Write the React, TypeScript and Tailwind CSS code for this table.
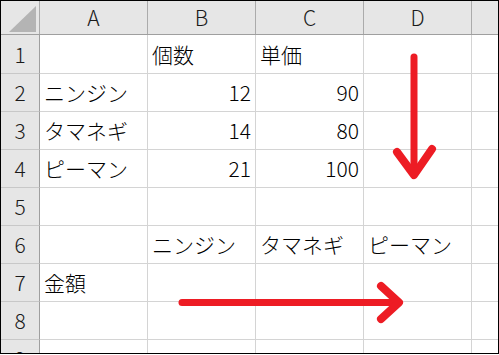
import React from "react";

const COLS = ["A", "B", "C", "D"];

type Cell = { text: string; align?: "left" | "right" };

const ROWS: { label: string; h: string; cells: (Cell | null)[] }[] = [
  { label: "1", h: "h-[39px]", cells: [null, { text: "個数" }, { text: "単価" }, null] },
  {
    label: "2",
    h: "h-[38px]",
    cells: [{ text: "ニンジン" }, { text: "12", align: "right" }, { text: "90", align: "right" }, null],
  },
  {
    label: "3",
    h: "h-[38px]",
    cells: [{ text: "タマネギ" }, { text: "14", align: "right" }, { text: "80", align: "right" }, null],
  },
  {
    label: "4",
    h: "h-[38px]",
    cells: [{ text: "ピーマン" }, { text: "21", align: "right" }, { text: "100", align: "right" }, null],
  },
  { label: "5", h: "h-[38px]", cells: [null, null, null, null] },
  {
    label: "6",
    h: "h-[38px]",
    cells: [null, { text: "ニンジン" }, { text: "タマネギ" }, { text: "ピーマン" }],
  },
  { label: "7", h: "h-[38px]", cells: [{ text: "金額" }, null, null, null] },
  { label: "8", h: "h-[38px]", cells: [null, null, null, null] },
  { label: "9", h: "h-[38px]", cells: [null, null, null, null] },
];

export default function App() {
  return (
    <div className="w-[499px] h-[355px] bg-white">
      <div
        className="relative w-[499px] h-[354px] border border-black overflow-hidden text-[21px] font-light leading-none text-black"
        style={{ fontFamily: '"Noto Sans CJK JP", "Noto Sans", sans-serif' }}
      >
        {/* column headers */}
        <div className="flex h-[34px] bg-[#e6e6e6] border-b border-[#9f9f9f] text-[#1a1a1a]">
          <div className="relative w-[39px] shrink-0 border-r border-[#ababab]">
            <svg className="absolute left-0 top-0" width="38" height="33">
              <polygon points="8,31 35,5 35,31" fill="#b4b4b4" />
            </svg>
          </div>
          {COLS.map((c) => (
            <div
              key={c}
              className="w-[108px] shrink-0 border-r border-[#ababab] flex items-center justify-center"
            >
              {c}
            </div>
          ))}
          <div className="flex-1" />
        </div>

        {ROWS.map((row) => (
          <div key={row.label} className={`flex ${row.h} shrink-0`}>
            <div className="w-[39px] shrink-0 bg-[#e6e6e6] border-r border-b border-r-[#9f9f9f] border-b-[#c8c8c8] flex items-center justify-center text-[#1a1a1a]">
              {row.label}
            </div>
            {row.cells.map((cell, i) => (
              <div
                key={i}
                className={
                  "w-[108px] shrink-0 border-r border-b border-[#d4d4d4] flex items-center px-[4px] whitespace-nowrap " +
                  (cell?.align === "right" ? "justify-end" : "justify-start")
                }
              >
                {cell?.text}
              </div>
            ))}
            <div className="flex-1 border-b border-[#d4d4d4]" />
          </div>
        ))}

        {/* red arrows drawn over the sheet */}
        <svg
          className="absolute left-[-1px] top-[-1px] pointer-events-none"
          width="499"
          height="355"
          fill="none"
          stroke="#ed1c24"
          strokeLinecap="round"
          strokeLinejoin="round"
        >
          <line x1="414" y1="57" x2="414" y2="174" strokeWidth="7" />
          <polyline points="397,152 414,175 432,149" strokeWidth="8" />
          <line x1="182" y1="302.5" x2="398" y2="302.5" strokeWidth="7" />
          <polyline points="381,286 399,302.5 381,319" strokeWidth="8" />
        </svg>
      </div>
    </div>
  );
}
